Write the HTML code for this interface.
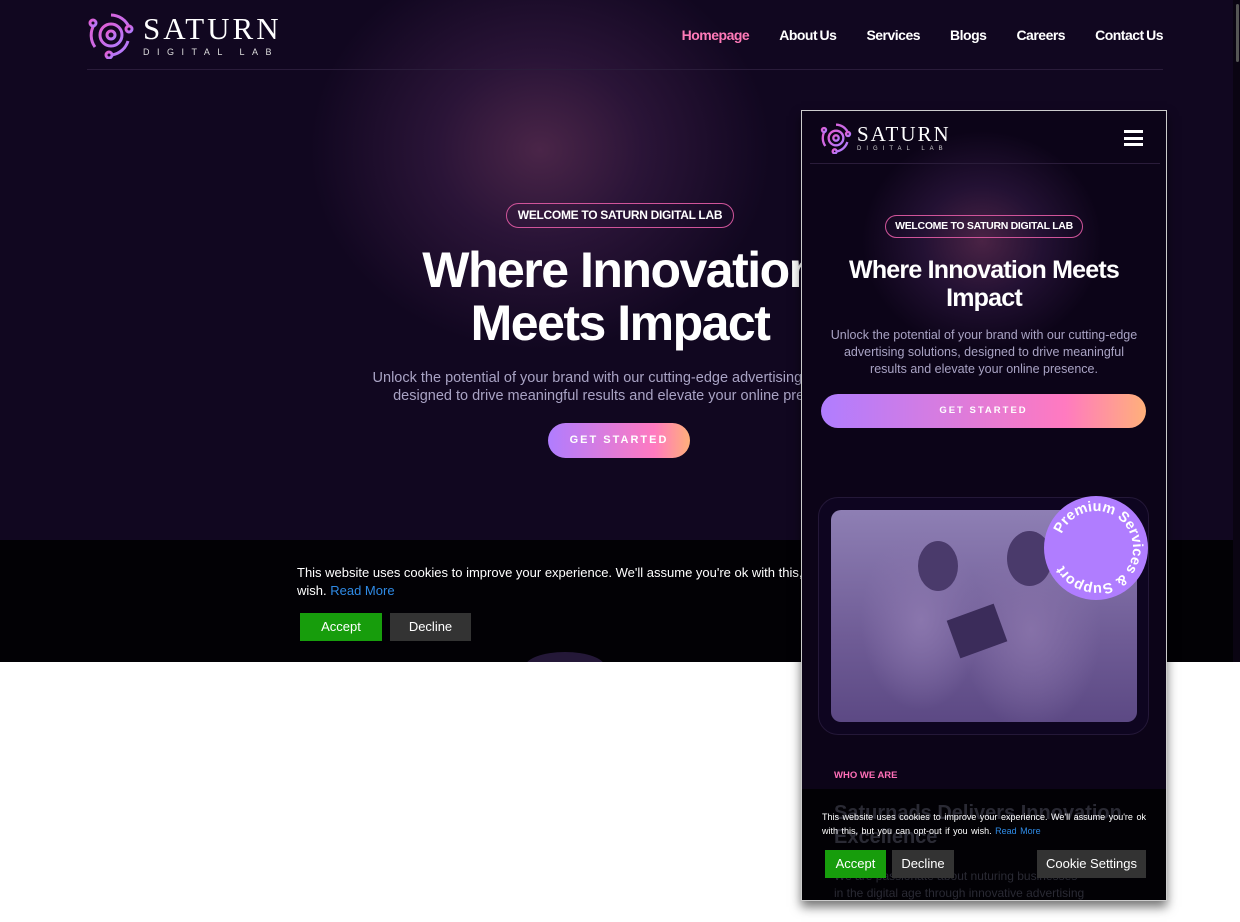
<!DOCTYPE html>
<html><head><meta charset="utf-8"><style>
*{margin:0;padding:0;box-sizing:border-box}
body{width:1240px;height:922px;overflow:hidden;background:#fff;font-family:"Liberation Sans",sans-serif;position:relative}
.hero{position:absolute;left:0;top:0;width:1240px;height:662px;background:radial-gradient(ellipse 230px 200px at 540px 150px,#4a2548 0%,#2a1437 45%,rgba(20,8,36,0) 100%),#110720;overflow:hidden}
.nav{position:absolute;top:69px;left:87px;width:1076px;height:1px;background:#2a1c3a}
.menu{position:absolute;top:27px;right:77px;display:flex;gap:30px;font-weight:bold;font-size:14px;color:#fff;letter-spacing:-.5px;word-spacing:-1px}
.menu span:first-child{color:#ff7ab8}
.logo{position:absolute;display:flex;align-items:center}
.wm{color:#fff;font-family:"Liberation Serif",serif}
.badge{position:absolute;border:1px solid #d0549a;border-radius:20px;color:#fff;font-weight:bold;text-align:center;letter-spacing:-.3px}
h1{position:absolute;color:#fff;text-align:center;font-weight:bold;letter-spacing:-1.5px}
.p{position:absolute;color:#a9a3c4;text-align:center}
.btn{position:absolute;border-radius:30px;background:linear-gradient(90deg,#b07dff 0%,#ff7ac0 75%,#ffb07a 100%);color:#fff;font-weight:bold;letter-spacing:2px;text-align:center}
.cookie{position:absolute;left:0;top:540px;width:1240px;height:122px;background:#020105}
.cb{position:absolute;color:#fff;font-size:13px;text-align:center}
.panel{position:absolute;left:801px;top:110px;width:366px;height:791px;border:1px solid #ccc;background:radial-gradient(ellipse 120px 110px at 180px 130px,#4a2345 0%,#231133 50%,rgba(14,5,28,0) 100%),#0c0418;box-shadow:0 6px 10px rgba(0,0,0,.55);overflow:hidden}
</style></head><body>
<div class="hero">
  <div class="logo" style="left:87px;top:11px">
    <svg width="48" height="48" viewBox="0 0 48 48" fill="none" stroke="url(#g)" stroke-width="3"><defs><linearGradient id="g" x1="0" y1="0" x2="1" y2="1"><stop offset="0" stop-color="#e25bd0"/><stop offset="1" stop-color="#b07dff"/></linearGradient></defs><circle cx="24" cy="24" r="11"/><circle cx="24" cy="24" r="4"/><path d="M24 4a20 20 0 0 1 18 12M41 30a20 20 0 0 1-16 14M8 36A20 20 0 0 1 7 14"/><circle cx="42" cy="18" r="3"/><circle cx="22" cy="44" r="3"/><circle cx="6" cy="12" r="3"/></svg>
    <div style="margin-left:8px"><div class="wm" style="font-size:31px;letter-spacing:3px;line-height:30px">SATURN</div><div style="color:#ddd;font-size:9px;letter-spacing:7.5px;margin-top:3px">DIGITAL LAB</div></div>
  </div>
  <div class="menu"><span>Homepage</span><span>About Us</span><span>Services</span><span>Blogs</span><span>Careers</span><span>Contact Us</span></div>
  <div class="nav"></div>
  <div class="badge" style="left:506px;top:203px;width:228px;height:25px;font-size:12px;line-height:23px">WELCOME TO SATURN DIGITAL LAB</div>
  <h1 style="left:320px;width:600px;top:244px;font-size:50px;line-height:53px">Where Innovation<br>Meets Impact</h1>
  <div class="p" style="left:320px;width:600px;top:369px;font-size:14.5px;line-height:18px">Unlock the potential of your brand with our cutting-edge advertising solutions,<br>designed to drive meaningful results and elevate your online presence.</div>
  <div class="btn" style="left:548px;top:423px;width:142px;height:35px;line-height:35px;font-size:11px">GET STARTED</div>
  <div class="cookie">
    <div style="position:absolute;left:297px;top:24px;color:#fff;font-size:13px;line-height:18px;width:700px">This website uses cookies to improve your experience. We'll assume you're ok with this, but you can opt-out if you wish.<br>wish. <span style="color:#2f8be6">Read More</span></div>
    <div class="cb" style="left:300px;top:73px;width:82px;height:28px;line-height:28px;background:#179d0c">Accept</div>
    <div class="cb" style="left:390px;top:73px;width:81px;height:28px;line-height:28px;background:#333">Decline</div>
    <div style="position:absolute;left:525px;top:112px;width:80px;height:30px;border-radius:50%;background:#241838"></div>
  </div>
  <div style="position:absolute;left:1233px;top:0;width:7px;height:662px;background:#0a0412"></div>
  <div style="position:absolute;left:1236px;top:4px;width:3px;height:58px;background:#555;border-radius:2px"></div>
</div>
<div class="panel">
  <div class="logo" style="left:18px;top:11px">
    <svg width="32" height="32" viewBox="0 0 48 48" fill="none" stroke="url(#g)" stroke-width="3.5"><circle cx="24" cy="24" r="11"/><circle cx="24" cy="24" r="4"/><path d="M24 4a20 20 0 0 1 18 12M41 30a20 20 0 0 1-16 14M8 36A20 20 0 0 1 7 14"/><circle cx="42" cy="18" r="3"/><circle cx="22" cy="44" r="3"/><circle cx="6" cy="12" r="3"/></svg>
    <div style="margin-left:5px"><div class="wm" style="font-size:21px;letter-spacing:2px;line-height:20px">SATURN</div><div style="color:#ccc;font-size:6px;letter-spacing:5px;margin-top:2px">DIGITAL LAB</div></div>
  </div>
  <div style="position:absolute;left:322px;top:19px;width:19px;height:16px;border-top:3px solid #fff;border-bottom:3px solid #fff"><div style="margin-top:3.5px;height:3px;background:#fff"></div></div>
  <div style="position:absolute;left:8px;top:52px;width:350px;height:1px;background:#2a1c3a"></div>
  <div class="badge" style="left:83px;top:104px;width:198px;height:23px;font-size:10.5px;line-height:21px">WELCOME TO SATURN DIGITAL LAB</div>
  <h1 style="left:0;width:364px;top:145px;font-size:25px;line-height:28px;letter-spacing:-.8px">Where Innovation Meets<br>Impact</h1>
  <div class="p" style="left:10px;width:344px;top:216px;font-size:12.5px;line-height:17px">Unlock the potential of your brand with our cutting-edge<br>advertising solutions, designed to drive meaningful<br>results and elevate your online presence.</div>
  <div class="btn" style="left:19px;top:283px;width:325px;height:34px;line-height:34px;font-size:9.5px">GET STARTED</div>
  <div style="position:absolute;left:16px;top:386px;width:331px;height:238px;border:1px solid #241838;border-radius:20px;background:#0e0520"></div>
  <div style="position:absolute;left:29px;top:399px;width:306px;height:212px;border-radius:10px;background:radial-gradient(ellipse 60px 90px at 90px 110px,#8a76ad,transparent),radial-gradient(ellipse 70px 100px at 200px 120px,#8671a8,transparent),linear-gradient(180deg,#8e7fb4 0%,#6f5c96 60%,#5c4984 100%)"></div>
  <div style="position:absolute;left:116px;top:430px;width:40px;height:50px;border-radius:50%;background:#4a3a6b"></div>
  <div style="position:absolute;left:205px;top:420px;width:45px;height:55px;border-radius:50%;background:#4a3a6b"></div>
  <div style="position:absolute;left:150px;top:500px;width:50px;height:40px;background:#3b2c5a;transform:rotate(-20deg)"></div>
  <div style="position:absolute;left:242px;top:385px;width:104px;height:104px;border-radius:50%;background:#b07dff">
    <svg width="104" height="104" viewBox="0 0 104 104" style="transform:rotate(22deg)"><defs><path id="c" d="M52 52m-37 0a37 37 0 1 1 74 0a37 37 0 1 1-74 0"/></defs><text fill="#fff" font-family="Liberation Sans" font-weight="bold" font-size="14.5"><textPath href="#c" startOffset="0">Premium Services &amp; Support</textPath></text></svg>
  </div>
  <div style="position:absolute;left:32px;top:659px;font-size:9.5px;font-weight:bold;color:#ff6fb8">WHO WE ARE</div>
  <div style="position:absolute;left:0;top:678px;width:366px;height:113px;background:#020105"></div>
  <div style="position:absolute;left:32px;top:690px;font-size:20px;font-weight:bold;color:#2a2a34;line-height:24px">Saturnads Delivers Innovation<br>Excellence</div>
  <div style="position:absolute;left:32px;top:757px;font-size:12px;color:#2a2a34;line-height:17px">We are passionate about nuturing businesses<br>in the digital age through innovative advertising</div>
  <div style="position:absolute;left:20px;top:699px;width:324px;color:#fff;font-size:9px;line-height:14px;text-align:justify;word-spacing:1px">This website uses cookies to improve your experience. We'll assume you're ok with this, but you can opt-out if you wish. <span style="color:#2f8be6">Read More</span></div>
  <div class="cb" style="left:23px;top:739px;width:61px;height:28px;line-height:28px;background:#179d0c">Accept</div>
  <div class="cb" style="left:90px;top:739px;width:62px;height:28px;line-height:28px;background:#333">Decline</div>
  <div class="cb" style="left:235px;top:739px;width:109px;height:28px;line-height:28px;background:#333">Cookie Settings</div>
</div>
</body></html>
